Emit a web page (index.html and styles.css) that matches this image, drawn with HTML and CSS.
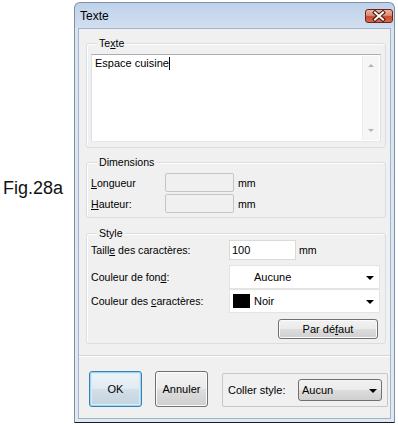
FILE: index.html
```html
<!DOCTYPE html>
<html lang="fr">
<head>
<meta charset="utf-8">
<title>Texte</title>
<link rel="stylesheet" href="styles.css">
</head>
<body>
<div class="page">
  <div class="fig">Fig.28a</div>
  <div class="window">
    <div class="titlebar">
      <span class="title">Texte</span>
      <div class="close">
        <svg width="28" height="14" viewBox="0 0 28 14">
          <path d="M10 3.5 L18 10.5 M18 3.5 L10 10.5" stroke="#4a1208" stroke-width="4" stroke-linecap="square"/>
          <path d="M10 3.5 L18 10.5 M18 3.5 L10 10.5" stroke="#ffffff" stroke-width="2" stroke-linecap="square"/>
        </svg>
      </div>
    </div>
    <div class="client">
      <div class="group g-texte">
        <div class="legend">Te<u>x</u>te</div>
        <div class="textbox">
          <div class="textcontent">Espace cuisine<span class="caret"></span></div>
          <div class="vscroll"><span class="arr up"></span><span class="arr down"></span></div>
        </div>
      </div>

      <div class="group g-dim">
        <div class="legend">Dimensions</div>
        <div class="row dim-row first">
          <span class="lbl lbl-dim"><u>L</u>ongueur</span>
          <span class="field disabled"></span>
          <span class="unit">mm</span>
        </div>
        <div class="row dim-row">
          <span class="lbl lbl-dim"><u>H</u>auteur:</span>
          <span class="field disabled"></span>
          <span class="unit">mm</span>
        </div>
      </div>

      <div class="group g-style">
        <div class="legend">Style</div>
        <div class="row size-row">
          <span class="lbl lbl-style">Taill<u>e</u> des caractères:</span>
          <span class="field size-field">100</span>
          <span class="unit unit-style">mm</span>
        </div>
        <div class="row dd-row first-dd">
          <span class="lbl lbl-style">Couleur de fon<u>d</u>:</span>
          <span class="dropdown">
            <span class="swatch none"></span><span class="dd-text">Aucune</span><span class="dd-arrow"></span>
          </span>
        </div>
        <div class="row dd-row">
          <span class="lbl lbl-style">Couleur des <u>c</u>aractères:</span>
          <span class="dropdown">
            <span class="swatch black"></span><span class="dd-text">Noir</span><span class="dd-arrow"></span>
          </span>
        </div>
        <div class="btn-line">
          <span class="btn btn-default">Par dé<u>f</u>aut</span>
        </div>
      </div>

      <div class="separator"></div>

      <div class="actions">
        <span class="btn btn-ok">OK</span>
        <span class="btn btn-cancel">Annuler</span>
        <div class="paste-box">
          <span class="paste-label">Coller style:</span>
          <span class="combo"><span class="combo-text">Aucun</span><span class="dd-arrow"></span></span>
        </div>
      </div>
    </div>
  </div>
</div>
</body>
</html>
```

FILE: styles.css
```css
html, body {
  margin: 0;
  padding: 0;
  background: #ffffff;
}

body {
  font-family: "Liberation Sans", Arial, sans-serif;
  font-size: 10.6px;
  color: #000;
}

.page {
  display: flex;
  width: 398px;
  height: 425px;
  overflow: hidden;
}

.fig {
  width: 71px;
  padding: 178px 0 0 3px;
  font-size: 18px;
  line-height: 21px;
  color: #111;
}

.window {
  box-sizing: border-box;
  width: 321px;
  height: 421px;
  margin-top: 2px;
  border: 1px solid #7d90a8;
  border-bottom-color: #1a1a1a;
  border-radius: 6px 6px 0 0;
  padding: 0 3px 3px;
  background: linear-gradient(to bottom, #bfd2ea 0px, #d0def0 24px, #dae5f2 26px, #dee9f4 100%);
  display: flex;
  flex-direction: column;
}

.titlebar {
  height: 25px;
  margin: 0 -3px;
  padding: 0 1px 0 5px;
  display: flex;
  align-items: center;
  justify-content: space-between;
}

.title {
  font-size: 12px;
  color: #000;
}

.close {
  width: 28px;
  height: 14px;
  box-sizing: border-box;
  border: 1px solid #6b2418;
  border-radius: 3px;
  background: linear-gradient(to bottom, #eab3a6 0%, #dc8a76 45%, #c94a32 55%, #d56a4e 100%);
  display: flex;
  align-items: center;
  justify-content: center;
  overflow: hidden;
}

.close svg {
  display: block;
  margin: -1px;
}

.client {
  flex: 1;
  background: #f0f0f0;
  border: 1px solid #a3b3c8;
  display: flex;
  flex-direction: column;
}

.group {
  box-sizing: border-box;
  width: 300px;
  margin: 14px 0 0 7px;
  border: 1px solid #d5dfe5;
  border-radius: 3px;
  box-shadow: inset 1px 1px 0 #ffffff;
}

.legend {
  display: table;
  margin: -7px 0 0 6px;
  padding: 0 2px;
  height: 13px;
  line-height: 13px;
  background: #f0f0f0;
}

.g-texte {
  padding: 0 4px 5px;
}

.textbox {
  box-sizing: border-box;
  margin-top: 4px;
  height: 88px;
  display: flex;
  background: #ffffff;
  border: 1px solid #abadb3;
  border-left-color: #dbdfe6;
  border-right-color: #dbdfe6;
  border-bottom-color: #e3e9ef;
}

.textcontent {
  flex: 1;
  padding: 2px 3px;
  line-height: 13px;
  font-size: 11px;
}

.caret {
  display: inline-block;
  width: 1px;
  height: 13px;
  background: #000;
  vertical-align: -3px;
}

.vscroll {
  width: 16px;
  margin: 1px 1px 1px 0;
  background: #f6f6f6;
  border-left: 1px solid #ececec;
  display: flex;
  flex-direction: column;
  justify-content: space-between;
  align-items: center;
  padding: 8px 0;
}

.arr {
  width: 0;
  height: 0;
  border-left: 3px solid transparent;
  border-right: 3px solid transparent;
}

.arr.up {
  border-bottom: 3px solid #b4b4b4;
}

.arr.down {
  border-top: 3px solid #b4b4b4;
}

.g-dim {
  padding: 0 0 3px 4px;
}

.row {
  display: flex;
  align-items: center;
}

.dim-row {
  height: 21px;
}

.dim-row.first {
  margin-top: 3px;
}

.lbl-dim {
  width: 74px;
}

.field {
  box-sizing: border-box;
  height: 19px;
  border: 1px solid #c5c5c5;
  border-radius: 2px;
  line-height: 17px;
  padding-left: 2px;
}

.field.disabled {
  width: 69px;
  background: #f0f0f0;
}

.unit {
  margin-left: 4px;
}

.g-style {
  margin-top: 15px;
  padding: 0 0 4px 4px;
}

.lbl-style {
  width: 138px;
}

.size-row {
  height: 20px;
}

.size-field {
  width: 67px;
  height: 20px;
  line-height: 18px;
  font-size: 11px;
  background: #ffffff;
  border-color: #dadada;
  border-radius: 0;
}

.unit-style {
  margin-left: 3px;
}

.dd-row {
  height: 24px;
}

.first-dd {
  margin-top: 5px;
}

.dropdown {
  box-sizing: border-box;
  width: 151px;
  height: 24px;
  background: #ffffff;
  border: 1px solid #e4e4e4;
  display: flex;
  align-items: center;
  padding: 0 5px 0 3px;
  font-size: 11px;
}

.swatch {
  width: 17px;
  height: 14px;
  margin-right: 4px;
}

.swatch.black {
  background: #000;
}

.dd-text {
  flex: 1;
}

.dd-arrow {
  width: 0;
  height: 0;
  border-left: 4px solid transparent;
  border-right: 4px solid transparent;
  border-top: 4px solid #000;
  margin-top: 2px;
}

.btn-line {
  display: flex;
  justify-content: flex-end;
  margin: 6px 7px 0 0;
}

.btn {
  box-sizing: border-box;
  display: flex;
  align-items: center;
  justify-content: center;
  border: 1px solid #707070;
  border-radius: 3px;
  background: linear-gradient(to bottom, #f2f2f2 0%, #ebebeb 48%, #dddddd 52%, #cfcfcf 100%);
  box-shadow: inset 0 0 0 1px #fbfbfb;
  font-size: 11px;
}

.btn-default {
  width: 100px;
  height: 20px;
}

.separator {
  margin-top: 11px;
  height: 1px;
  border-top: 1px solid #d5d5d5;
  background: #ffffff;
}

.actions {
  margin-top: 14px;
  padding-left: 10px;
  display: flex;
  align-items: flex-end;
}

.btn-ok {
  width: 53px;
  height: 36px;
  border-color: #3c7fb1;
  background: linear-gradient(to bottom, #eef4f8 0%, #e2ebf2 48%, #d2dee8 52%, #c4d3df 100%);
  box-shadow: inset 0 0 0 1px #9bd6f2, inset 0 0 0 2px #d4eefb;
}

.btn-cancel {
  width: 53px;
  height: 36px;
  margin-left: 13px;
}

.paste-box {
  box-sizing: border-box;
  width: 166px;
  height: 34px;
  margin-left: 14px;
  border: 1px solid #c7c7c7;
  border-radius: 2px;
  display: flex;
  align-items: center;
  padding: 0 5px 0 5px;
  font-size: 11px;
}

.paste-label {
  flex: 1;
}

.combo {
  box-sizing: border-box;
  width: 84px;
  height: 22px;
  border: 1px solid #707070;
  border-radius: 3px;
  background: linear-gradient(to bottom, #f2f2f2 0%, #ebebeb 48%, #dddddd 52%, #cfcfcf 100%);
  display: flex;
  align-items: center;
  padding: 0 4px 0 3px;
}

.combo-text {
  flex: 1;
}
```
